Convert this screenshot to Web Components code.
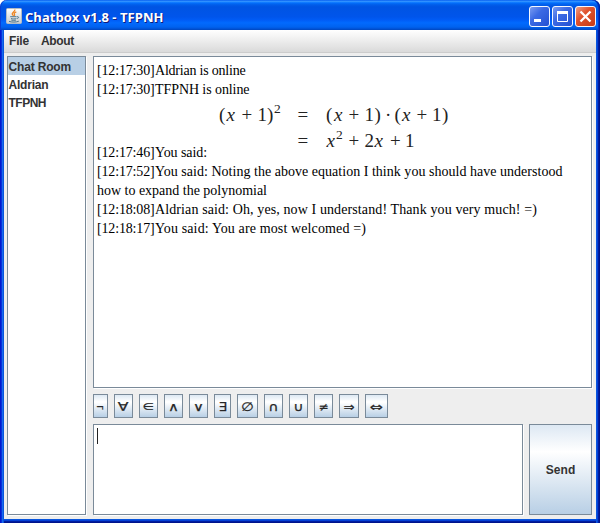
<!DOCTYPE html>
<html lang="en">
<head>
<meta charset="utf-8">
<title>Chatbox v1.8 - TFPNH</title>
<style>
html,body{margin:0;width:600px;height:523px;overflow:hidden;background:#fff}
</style>
</head>
<body>
<chat-window></chat-window>
<script>
const define=(name,css,html,after)=>customElements.define(name,class extends HTMLElement{
  connectedCallback(){
    if(this.shadowRoot)return;
    const r=this.attachShadow({mode:'open'});
    const t=document.createElement('template');
    t.innerHTML='<style>'+css+'</style>'+html;
    r.append(t.content.cloneNode(true));
    if(after)after(this,r);
  }
});

/* One line of text whose letter spacing is adjusted to fill the width in "w". */
define('fit-text',':host{display:inline-block;white-space:pre}span{display:inline-block}','<span><slot></slot></span>',(el,r)=>{
  const s=r.querySelector('span'),w=+el.getAttribute('w');
  if(!w)return;
  const d=(w-s.getBoundingClientRect().width)/el.textContent.length;
  s.style.letterSpacing=d.toFixed(4)+'px';
});

define('java-icon',':host{display:block;width:16px;height:16px}svg{display:block}',`
<svg width="16" height="16" viewBox="0 0 16 16">
<defs><linearGradient id="g" x2="0" y2="1"><stop stop-color="#fff"/><stop offset="1" stop-color="#c8ccd0"/></linearGradient></defs>
<rect x=".5" y=".5" width="15" height="15" rx="1" fill="url(#g)" stroke="#b4bcc4"/>
<path d="M8.8 1.6C9.6 3.6 5.2 4.3 6.3 6.3c.3.6.9 1 1.2 1.5M10.3 3.8C8.6 4.5 7.6 5.2 8.5 6.4c.4.6 0 1.1-.4 1.5" fill="none" stroke="#ee8420" stroke-width="1.3"/>
<path d="M4.2 8.7h6.4M5 10.5c1.5.6 4 .6 5.4 0M5.3 12.1c1.4.4 3.4.4 4.7 0M11 8.8c2-.7 2.2 1.3.2 1.8M3 13.4c2.5.9 7.5.9 9.8-.2" fill="none" stroke="#4f7890" stroke-width="1"/>
</svg>`);

define('caption-button',`:host{display:block;width:21px;height:21px}svg{display:block}`,`<svg width="21" height="21" viewBox="0 0 21 21"></svg>`,(el,r)=>{
  const k=el.getAttribute('kind'),c=k==='close'?['#f0a48c','#e0532e','#c53a14']:['#7f9ff2','#3c6ae4','#2350d2'];
  const g={
    min:'<path d="M5 13h7v3H5z" fill="#fff"/>',
    max:'<path d="M5.5 5.5h10v10h-10z" fill="none" stroke="#fff"/><path d="M5 5h11v3H5z" fill="#fff"/>',
    close:'<path d="M5.5 5.5l10 10M15.5 5.5l-10 10" stroke="#fff" stroke-width="2.3"/>'
  }[k];
  r.querySelector('svg').innerHTML=`<defs><linearGradient id="g" x2="1" y2="1"><stop stop-color="${c[0]}"/><stop offset=".4" stop-color="${c[1]}"/><stop offset="1" stop-color="${c[2]}"/></linearGradient></defs><rect x=".5" y=".5" width="20" height="20" rx="2.5" fill="url(#g)" stroke="#f4f7ff"/>${g}`;
});

define('title-bar',`
:host{display:flex;height:30px;box-sizing:border-box;padding:1px 4px 0 6px;align-items:center;border-radius:7px 7px 0 0;
background:linear-gradient(#0058ee 0,#3593ff 4%,#288eff 6%,#127dff 8%,#036ffc 10%,#0262ee 14%,#0057e5 20%,#0054e3 24%,#0055eb 56%,#005bf5 66%,#026afe 76%,#0062ef 90%,#0052d6 96%,#0046bd 100%);
box-shadow:inset 1px 0 #0a3fd5,inset -1px 0 #001ea0,inset -2px 0 #0036c4;color:#fff;font:bold 13px/20px "Open Sans","Noto Sans",sans-serif;text-shadow:1px 1px #0f1a7a}
.t{flex:1;margin-left:3px;padding-top:3px}
.b{display:flex;gap:2px;margin-top:2px}`,
`<java-icon></java-icon><div class="t"><fit-text w="138.5">Chatbox v1.8 - TFPNH</fit-text></div>
<div class="b"><caption-button kind="min"></caption-button><caption-button kind="max"></caption-button><caption-button kind="close"></caption-button></div>`);

define('menu-bar',`
:host{display:flex;height:23px;box-sizing:border-box;border-bottom:1px solid #ccc;background:linear-gradient(#fff,#dadada);padding:4px 0 0 5px;gap:12px;line-height:15px}`,
`<fit-text w="20">File</fit-text><fit-text w="33">About</fit-text>`);

define('user-list',`
:host{display:block;box-sizing:border-box;width:79px;height:459px;background:#fff;border:1px solid #7a8a99;box-shadow:1px 1px #fff}
div{height:18px;line-height:20px;padding-left:.5px}
.s{background:#b8cfe5}`,
`<div class="s"><fit-text w="62.5">Chat Room</fit-text></div><div><fit-text w="40">Aldrian</fit-text></div><div><fit-text w="37.5">TFPNH</fit-text></div>`);

define('math-block',`:host{display:block;height:63px}svg{display:block;font:19px "Liberation Serif",serif;fill:#222}.i{font-style:italic}.s{font-size:13.5px}`,
`<svg width="250" height="63" viewBox="210 99 250 63">
<text y="120.5"><tspan x="219">(</tspan><tspan class="i" x="226.5">x</tspan><tspan x="241.5">+</tspan><tspan x="257.5">1</tspan><tspan x="267">)</tspan><tspan x="297.5">=</tspan><tspan x="326">(</tspan><tspan class="i" x="334">x</tspan><tspan x="348.5">+</tspan><tspan x="364.5">1</tspan><tspan x="374.5">)</tspan><tspan x="385">·</tspan><tspan x="394.5">(</tspan><tspan class="i" x="402">x</tspan><tspan x="416.5">+</tspan><tspan x="432">1</tspan><tspan x="442">)</tspan></text>
<text class="s" x="274" y="112.5">2</text>
<text y="147"><tspan x="297.5">=</tspan><tspan class="i" x="326.5">x</tspan><tspan x="348.5">+</tspan><tspan x="364.5">2</tspan><tspan class="i" x="374.5">x</tspan><tspan x="390">+</tspan><tspan x="405">1</tspan></text>
<text class="s" x="336" y="138.5">2</text></svg>`);

define('chat-line',`:host{display:flex;height:19px;white-space:nowrap}:host([math]){align-items:flex-end;height:63px}
.s{width:58px}`,``,(el,r)=>{
  const s=el.getAttribute('stamp'),m=el.hasAttribute('math');
  r.innerHTML+=(s?`<fit-text class="s" w="57.5">${s}</fit-text>`:'')+`<fit-text w="${el.getAttribute('w')}" style="${m?'width:55px':''}">${el.textContent}</fit-text>`+(m?'<math-block></math-block>':'');
});

define('chat-log',`
:host{display:block;box-sizing:border-box;width:499px;height:332px;background:#fff;border:1px solid #7a8a99;box-shadow:1px 1px #fff;padding:4px 3px;font:14px/19px "Liberation Serif",serif;color:#000}`,
`<chat-line stamp="[12:17:30]" w="90.5">Aldrian is online</chat-line>
<chat-line stamp="[12:17:30]" w="94.5">TFPNH is online</chat-line>
<chat-line math stamp="[12:17:46]" w="52">You said:</chat-line>
<chat-line stamp="[12:17:52]" w="407.5">You said: Noting the above equation I think you should have understood</chat-line>
<chat-line w="170">how to expand the polynomial</chat-line>
<chat-line stamp="[12:18:08]" w="382">Aldrian said: Oh, yes, now I understand! Thank you very much! =)</chat-line>
<chat-line stamp="[12:18:17]" w="211">You said: You are most welcomed =)</chat-line>`);

define('symbol-button',`
:host{display:flex;box-sizing:border-box;height:24px;border:1px solid #7a8a99;align-items:center;justify-content:center;background:linear-gradient(#dde8f3 0,#fff 30%,#fff 34%,#b8cfe5 100%);font:12px/14px "DejaVu Sans",sans-serif;color:#222;overflow:hidden}
span{display:block;transform:translateY(1px) scale(var(--sx,1),var(--sy,1));-webkit-text-stroke:.25px #333}`,`<span><slot></slot></span>`,el=>{
  el.style.width=el.getAttribute('w')+'px';
  el.style.setProperty('--sx',el.getAttribute('sx')||1);
  el.style.setProperty('--sy',el.getAttribute('sy')||1);
});

define('symbol-bar',`:host{display:flex;gap:6px;height:24px}`,
[['¬',15,.8,1],['∀',19,1.3,1],['∈',19,1.1,.85],['∧',19,1.25,1],['∨',19,1.25,1],['∃',17,1.1,1],['∅',21,1.2,1],['∩',19,1.2,1],['∪',19,1.2,1],['≠',19,1,1],['⇒',20,1.1,1],['⇔',23,1.3,1]]
.map(([c,w,s,y])=>`<symbol-button w="${w}" sx="${s}" sy="${y}">${c}</symbol-button>`).join(''));

define('message-input',`
:host{display:block;box-sizing:border-box;width:430px;height:91px;background:#fff;border:1px solid #7a8a99;box-shadow:1px 1px #fff;padding:3px}
i{display:block;width:1px;height:16px;background:#222}`,`<i></i>`);

define('send-button',`
:host{display:flex;box-sizing:border-box;width:63px;height:91px;border:1px solid #7a8a99;align-items:center;justify-content:center;background:linear-gradient(#dde8f3 0,#fff 30%,#b8cfe5 100%)}`,
`<fit-text w="29.5">Send</fit-text>`);

define('chat-window',`
:host{display:flex;flex-direction:column;width:600px;height:523px;font:bold 12px/18px "Liberation Sans",sans-serif;color:#333}
.f{flex:1;display:flex;flex-direction:column;padding:0 4px 4px;background:
linear-gradient(90deg,#0019cf 0 1px,#0831d9 1px 2px,#166aee 2px 3px,#0855dd 3px 4px) 0 0/4px 100% no-repeat,
linear-gradient(270deg,#00138c 0 1px,#001ea0 1px 2px,#0441d8 2px 3px,#0855dd 3px 4px) 100% 0/4px 100% no-repeat,
linear-gradient(0deg,#00138c 0 1px,#001ea0 1px 2px,#0441d8 2px 3px,#0855dd 3px 4px) 0 100%/100% 4px no-repeat}
.c{flex:1;background:#eee;display:flex;gap:7px;padding:3px 0 0 3px}
.r{display:flex;flex-direction:column}
symbol-bar{margin:6px 0}
.e{display:flex;gap:6px}`,
`<title-bar></title-bar><div class="f"><menu-bar></menu-bar><div class="c"><user-list></user-list>
<div class="r"><chat-log></chat-log><symbol-bar></symbol-bar><div class="e"><message-input></message-input><send-button></send-button></div></div></div></div>`);
</script>
</body>
</html>
